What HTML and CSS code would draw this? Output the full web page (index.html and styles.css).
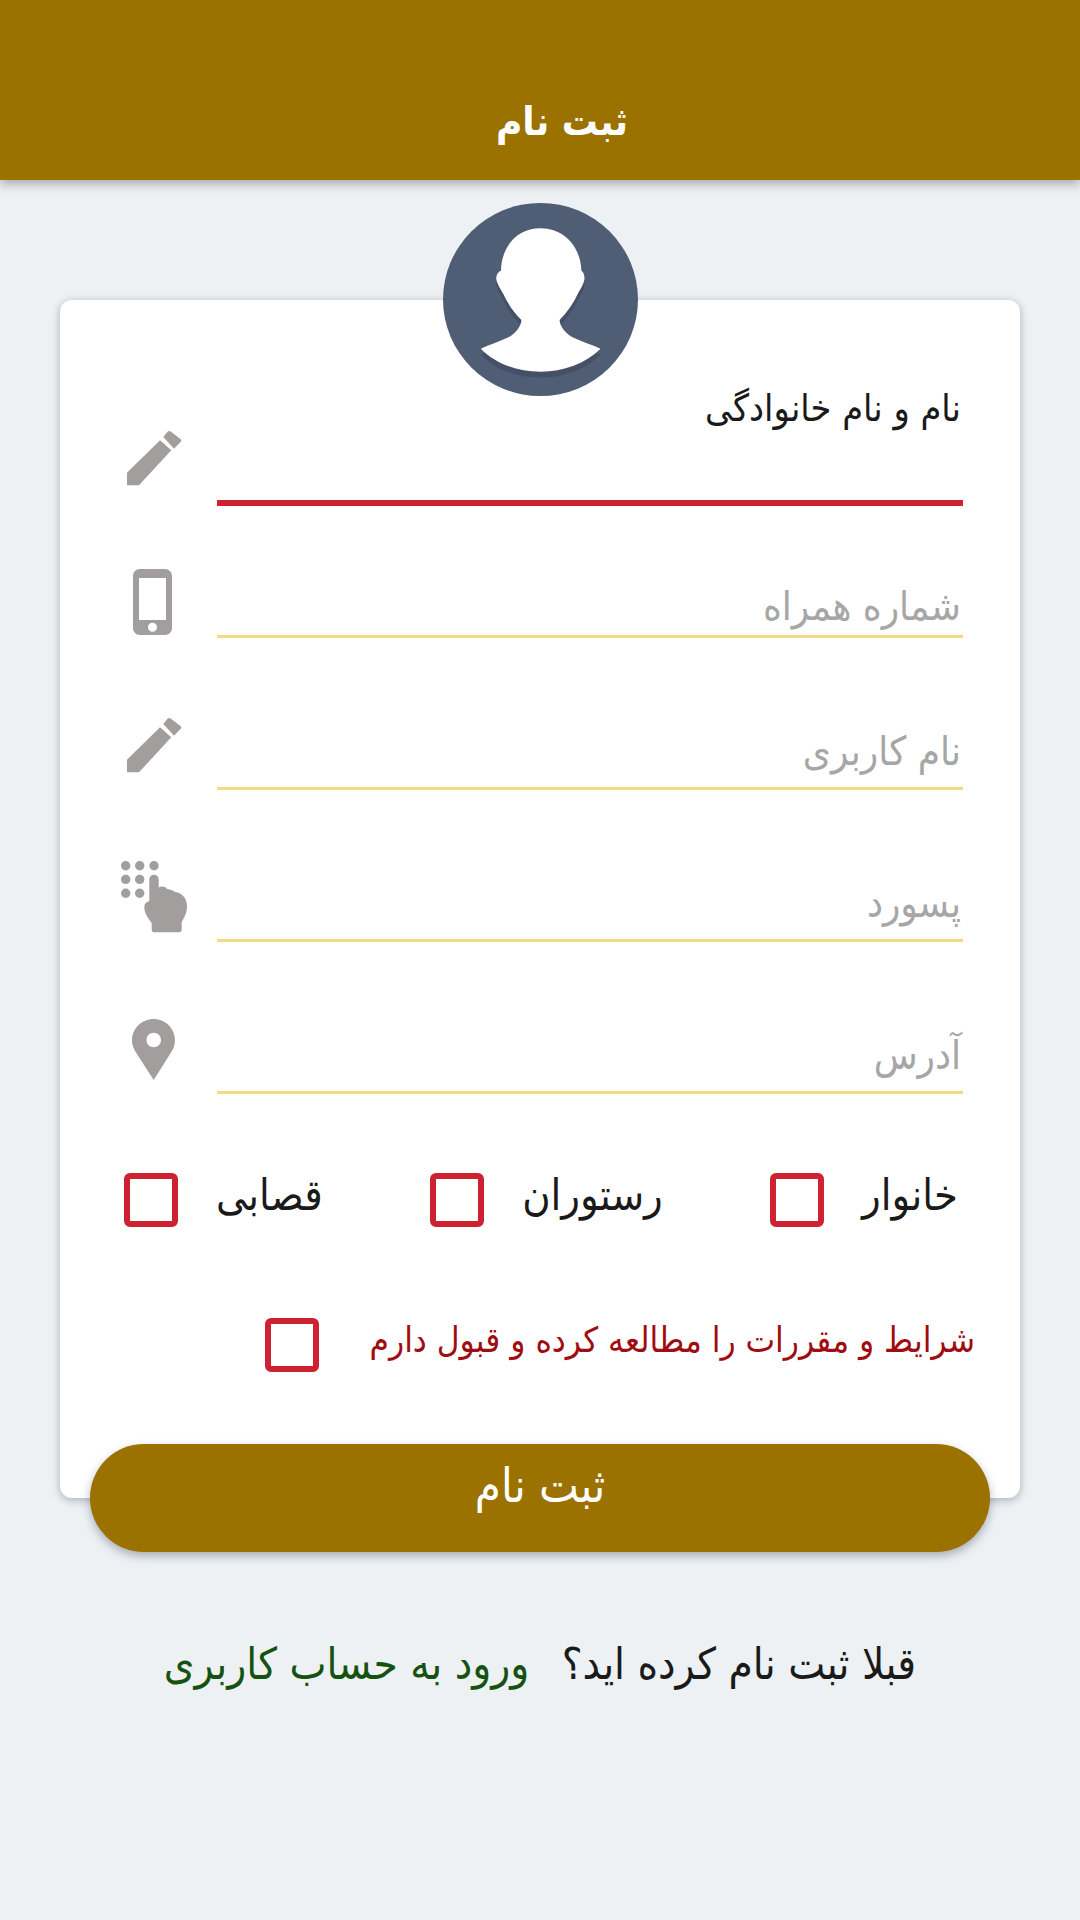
FILE: index.html
```html
<!DOCTYPE html>
<html lang="fa" dir="rtl">
<head>
    <meta charset="UTF-8">
    <meta name="viewport" content="width=device-width, initial-scale=1.0">
    <title>ثبت نام</title>
    <link rel="stylesheet" href="styles.css">
</head>
<body>
    <header class="app-bar">
        <h1>ثبت نام</h1>
    </header>

    <main class="page">
        <div class="card">
            <svg class="avatar" viewBox="0 0 194 194" preserveAspectRatio="none">
                <circle cx="97" cy="97" r="97" fill="#4f5e74"/>
                <path transform="translate(0 7.500)" d="M97 24C73 24 58 43 57.700 66.700 54 68 53 72 53 75 54 81 58 86 60 90 64 99 70 108 78 116 78 122 72 130 64 134 56 138 46 141 37.700 145 52 160 74 168 97 168 120 168 142 160 156.700 145 148 141 138 138 130 134 122 130 116 122 116 116 124 108 130 99 134 90 136 86 140 81 140.700 75 141 72 140 68 137.700 66.700 137 43 121 24 97 24Z" fill="#454f66"/>
                <path transform="translate(0 1.500)" d="M97 24C73 24 58 43 57.700 66.700 54 68 53 72 53 75 54 81 58 86 60 90 64 99 70 108 78 116 78 122 72 130 64 134 56 138 46 141 37.700 145 52 160 74 168 97 168 120 168 142 160 156.700 145 148 141 138 138 130 134 122 130 116 122 116 116 124 108 130 99 134 90 136 86 140 81 140.700 75 141 72 140 68 137.700 66.700 137 43 121 24 97 24Z" fill="#fff"/>
            </svg>

            <!-- فیلدها -->
            <div class="field field-active">
                <label class="float-label">نام و نام خانوادگی</label>
                <div class="line"></div>
                <svg class="icon icon-pencil" viewBox="0 0 54 54"><path d="M0 54.300V41.700L33 9.300 44.300 19.300 12 54.300zM36.300 6L40.500.800C41.500-.200 43-.200 44 .800L53.500 8C54.500 9 54.500 10 53.500 11L47 17.700z" fill="#a19e9d"/></svg>
            </div>
            <div class="field field-phone">
                <span class="hint">شماره همراه</span>
                <div class="line"></div>
                <svg class="icon icon-phone" viewBox="0 0 39 66"><path d="M7 0H32C36 0 39 3 39 7V59C39 63 36 66 32 66H7C3 66 0 63 0 59V7C0 3 3 0 7 0ZM6 9V51H33V9ZM19.500 53.800A4.500 4.500 0 1 0 19.500 62.800 4.500 4.500 0 0 0 19.500 53.800Z" fill="#a19e9d" fill-rule="evenodd"/></svg>
            </div>
            <div class="field">
                <span class="hint">نام کاربری</span>
                <div class="line"></div>
                <svg class="icon icon-pencil-low" viewBox="0 0 54 54"><path d="M0 54.300V41.700L33 9.300 44.300 19.300 12 54.300zM36.300 6L40.500.800C41.500-.200 43-.200 44 .800L53.500 8C54.500 9 54.500 10 53.500 11L47 17.700z" fill="#a19e9d"/></svg>
            </div>
            <div class="field">
                <span class="hint">پسورد</span>
                <div class="line"></div>
                <svg class="icon icon-pad" viewBox="0 0 66 72">
                    <g fill="#a19e9d">
                        <circle cx="4.700" cy="4.700" r="4.700"/><circle cx="18.700" cy="4.700" r="4.700"/><circle cx="33" cy="4.700" r="4.700"/>
                        <circle cx="4.700" cy="18.400" r="4.700"/><circle cx="18.700" cy="18.400" r="4.700"/>
                        <circle cx="4.700" cy="32.300" r="4.700"/><circle cx="18.700" cy="32.300" r="4.700"/>
                        <path d="M28.300 18.400A4.700 4.700 0 0 1 37.700 18.400V27C39 25 44 25 46 28 49 28.500 52 29 54 31 58 31 66 35 66 45 66 52 63 57 60.700 61V68Q60.700 71.300 58 71.300H33Q30.700 71.300 30.700 68V62C28 58 23.300 53 23.300 46 23.300 43 25 41 28.300 40Z"/>
                    </g>
                </svg>
            </div>
            <div class="field">
                <span class="hint">آدرس</span>
                <div class="line"></div>
                <svg class="icon icon-pin" viewBox="0 0 43 61"><path d="M21.700 0C9.700 0 0 9.500 0 21.500 0 26.500 2 30.500 4 33.500L21.700 61 39 33.500C41 30.500 43 26.500 43 21.500 43 9.500 33.500 0 21.700 0ZM21.700 13.700A7.300 7.300 0 1 1 21.700 28.300 7.300 7.300 0 0 1 21.700 13.700Z" fill="#a19e9d" fill-rule="evenodd"/></svg>
            </div>

            <div class="types">
                <label class="check"><span>خانوار</span><i class="box"></i></label>
                <label class="check"><span>رستوران</span><i class="box"></i></label>
                <label class="check"><span>قصابی</span><i class="box"></i></label>
            </div>

            <label class="terms"><span>شرایط و مقررات را مطالعه کرده و قبول دارم</span><i class="box"></i></label>

            <button class="submit">ثبت نام</button>
        </div>

        <p class="login-row">
            قبلا ثبت نام کرده اید؟
            <a href="#">ورود به حساب کاربری</a>
        </p>
    </main>
</body>
</html>
```

FILE: styles.css
```css
* {
    box-sizing: border-box;
    margin: 0;
    padding: 0;
}

body {
    font-family: "DejaVu Sans Condensed", "DejaVu Sans", "Noto Sans", sans-serif;
    font-stretch: condensed;
    background-color: #edf1f4;
    color: #1a1a1a;
    width: 1080px;
    height: 1920px;
    overflow: hidden;
}

.app-bar {
    height: 180px;
    background-color: #9b7200;
    box-shadow: 0 4px 10px rgba(0, 0, 0, 0.3);
    color: white;
    text-align: center;
    padding-top: 93px;
    padding-left: 44px;
}

.app-bar h1 {
    font-size: 40px;
    line-height: 56px;
    font-weight: bold;
}

.page {
    padding: 120px 60px 0;
}

.card {
    position: relative;
    height: 1198px;
    background-color: #ffffff;
    border-radius: 12px;
    box-shadow: 0 2px 8px rgba(60, 70, 85, 0.4);
    padding: 88px 57px 0 54px;
}

.avatar {
    position: absolute;
    top: -97px;
    left: 383px;
    width: 195px;
    height: 193px;
}

.field {
    position: relative;
    height: 152px;
    padding-left: 103px;
    display: flex;
    flex-direction: column;
    justify-content: flex-end;
}

.field-active {
    height: 118px;
}

.field-phone {
    height: 132px;
}

.hint {
    font-size: 40px;
    line-height: 58px;
    color: #a6a6a6;
    padding-right: 2px;
    margin-bottom: 7px;
}

.field-phone .hint {
    margin-bottom: 0;
}

.float-label {
    position: absolute;
    top: -3px;
    right: 2px;
    font-size: 37.500px;
    line-height: 46px;
}

.line {
    height: 3px;
    background-color: #f5d985;
}

.field-active .line {
    height: 6px;
    background-color: #ce2132;
}

.icon {
    position: absolute;
    overflow: visible;
}

.icon-pencil,
.icon-pencil-low {
    left: 13px;
    bottom: 21px;
    width: 54px;
    height: 54px;
}

.icon-pencil-low {
    bottom: 18px;
}

.icon-phone {
    left: 19px;
    bottom: 3px;
    width: 39px;
    height: 66px;
}

.icon-pad {
    left: 7px;
    bottom: 9px;
    width: 66px;
    height: 72px;
}

.icon-pin {
    left: 18px;
    bottom: 14px;
    width: 43px;
    height: 61px;
}

.types {
    display: flex;
    justify-content: space-between;
    margin-top: 76px;
    padding: 0 5px 0 10px;
}

.check,
.terms {
    display: flex;
    align-items: center;
    gap: 38px;
    font-size: 43px;
}

.check span,
.terms span {
    margin-bottom: 10px;
}

.box {
    display: block;
    flex: none;
    width: 54px;
    height: 54px;
    border: 6px solid #ce2132;
    border-radius: 6px;
}

.terms {
    margin-top: 88px;
    margin-right: -12px;
    font-size: 34.900px;
    color: #9f0d12;
    gap: 51px;
    white-space: nowrap;
}

.submit {
    position: absolute;
    left: 30px;
    right: 30px;
    top: 1144px;
    height: 108px;
    border: none;
    border-radius: 54px;
    background-color: #9b7200;
    box-shadow: 0 4px 10px rgba(60, 70, 85, 0.4);
    color: white;
    font-family: inherit;
    font-stretch: inherit;
    font-size: 47px;
    padding-bottom: 25px;
}

.login-row {
    text-align: center;
    margin-top: 138px;
    font-size: 43.700px;
    line-height: 56px;
}

.login-row a {
    color: #155210;
    text-decoration: none;
    margin-right: 20px;
}
```
